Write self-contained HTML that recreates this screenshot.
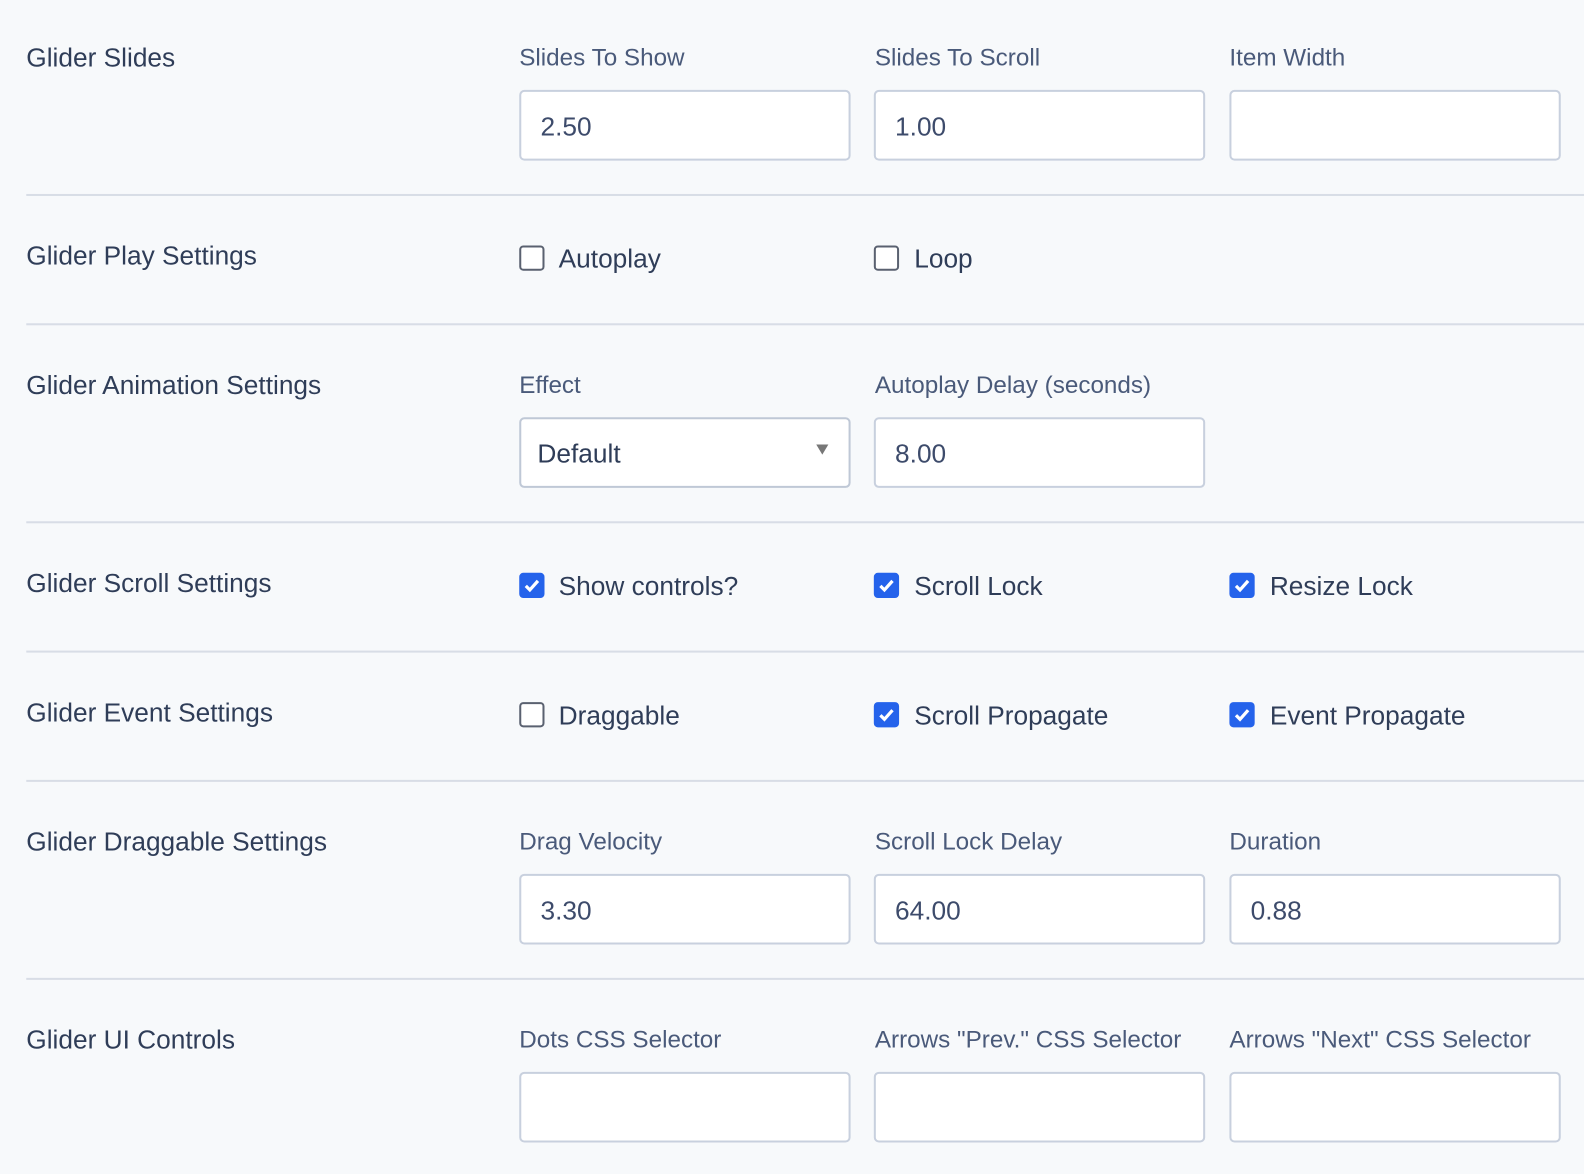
<!DOCTYPE html>
<html><head><style>
body{margin:0;width:1584px;height:1174px;background:#f7f9fb;font-family:"Liberation Sans",sans-serif;overflow:hidden}
#w{position:absolute;left:0;top:0;width:1568px;height:1162px;transform:scale(1.0102);transform-origin:0 0}
.a{position:absolute;white-space:nowrap}
.s{font-size:26px;line-height:28px;color:#2f3d58;left:26px}
.f{font-size:24px;line-height:28px;color:#4a5a7a}
.i{position:absolute;width:324px;height:66px;border:2px solid #c8d0de;border-radius:5px;background:#fff;box-sizing:content-box}
.i span{position:absolute;left:19px;top:20px;font-size:26px;line-height:28px;color:#3d4b6b}
.hr{position:absolute;left:26px;right:0;height:2px;background:#d8dde6}
.c{position:absolute;width:21px;height:21px;border:2px solid #5a6170;border-radius:4px;background:#fff}
.c.on{background:#2563eb;border-color:#2563eb}
.c.on svg{position:absolute;left:1px;top:1px}
.t{font-size:26px;line-height:28px;color:#2f3d58}
</style></head><body><div id="w">
<div class="a s" style="top:43px">Glider Slides</div>
<div class="a f" style="left:514px;top:44px">Slides To Show</div>
<div class="a f" style="left:866px;top:44px">Slides To Scroll</div>
<div class="a f" style="left:1217px;top:44px">Item Width</div>
<div class="i" style="left:514px;top:89px"><span>2.50</span></div>
<div class="i" style="left:865px;top:89px"><span>1.00</span></div>
<div class="i" style="left:1217px;top:89px"></div>
<div class="hr" style="top:192px"></div>

<div class="a s" style="top:239px">Glider Play Settings</div>
<div class="c" style="left:514px;top:243px"></div><div class="a t" style="left:553px;top:242px">Autoplay</div>
<div class="c" style="left:865px;top:243px"></div><div class="a t" style="left:905px;top:242px">Loop</div>
<div class="hr" style="top:320px"></div>

<div class="a s" style="top:367px">Glider Animation Settings</div>
<div class="a f" style="left:514px;top:368px">Effect</div>
<div class="a f" style="left:866px;top:368px">Autoplay Delay (seconds)</div>
<div class="i" style="left:514px;top:413px;border-color:#bfc8d6"><span style="left:16px;color:#2f3d58">Default</span><div style="position:absolute;left:292px;top:25px;width:0;height:0;border-left:6px solid transparent;border-right:6px solid transparent;border-top:10px solid #777"></div></div>
<div class="i" style="left:865px;top:413px"><span>8.00</span></div>
<div class="hr" style="top:516px"></div>

<div class="a s" style="top:563px">Glider Scroll Settings</div>
<div class="c on" style="left:514px;top:567px"><svg width="19" height="19" viewBox="0 0 19 19"><path d="M3.5 10l4 4 8-9" stroke="#fff" stroke-width="3.2" fill="none"/></svg></div><div class="a t" style="left:553px;top:566px">Show controls?</div>
<div class="c on" style="left:865px;top:567px"><svg width="19" height="19" viewBox="0 0 19 19"><path d="M3.5 10l4 4 8-9" stroke="#fff" stroke-width="3.2" fill="none"/></svg></div><div class="a t" style="left:905px;top:566px">Scroll Lock</div>
<div class="c on" style="left:1217px;top:567px"><svg width="19" height="19" viewBox="0 0 19 19"><path d="M3.5 10l4 4 8-9" stroke="#fff" stroke-width="3.2" fill="none"/></svg></div><div class="a t" style="left:1257px;top:566px">Resize Lock</div>
<div class="hr" style="top:644px"></div>

<div class="a s" style="top:691px">Glider Event Settings</div>
<div class="c" style="left:514px;top:695px"></div><div class="a t" style="left:553px;top:694px">Draggable</div>
<div class="c on" style="left:865px;top:695px"><svg width="19" height="19" viewBox="0 0 19 19"><path d="M3.5 10l4 4 8-9" stroke="#fff" stroke-width="3.2" fill="none"/></svg></div><div class="a t" style="left:905px;top:694px">Scroll Propagate</div>
<div class="c on" style="left:1217px;top:695px"><svg width="19" height="19" viewBox="0 0 19 19"><path d="M3.5 10l4 4 8-9" stroke="#fff" stroke-width="3.2" fill="none"/></svg></div><div class="a t" style="left:1257px;top:694px">Event Propagate</div>
<div class="hr" style="top:772px"></div>

<div class="a s" style="top:819px">Glider Draggable Settings</div>
<div class="a f" style="left:514px;top:820px">Drag Velocity</div>
<div class="a f" style="left:866px;top:820px">Scroll Lock Delay</div>
<div class="a f" style="left:1217px;top:820px">Duration</div>
<div class="i" style="left:514px;top:865px"><span>3.30</span></div>
<div class="i" style="left:865px;top:865px"><span>64.00</span></div>
<div class="i" style="left:1217px;top:865px"><span>0.88</span></div>
<div class="hr" style="top:968px"></div>

<div class="a s" style="top:1015px">Glider UI Controls</div>
<div class="a f" style="left:514px;top:1016px">Dots CSS Selector</div>
<div class="a f" style="left:866px;top:1016px">Arrows "Prev." CSS Selector</div>
<div class="a f" style="left:1217px;top:1016px">Arrows "Next" CSS Selector</div>
<div class="i" style="left:514px;top:1061px"></div>
<div class="i" style="left:865px;top:1061px"></div>
<div class="i" style="left:1217px;top:1061px"></div>
</div></body></html>
